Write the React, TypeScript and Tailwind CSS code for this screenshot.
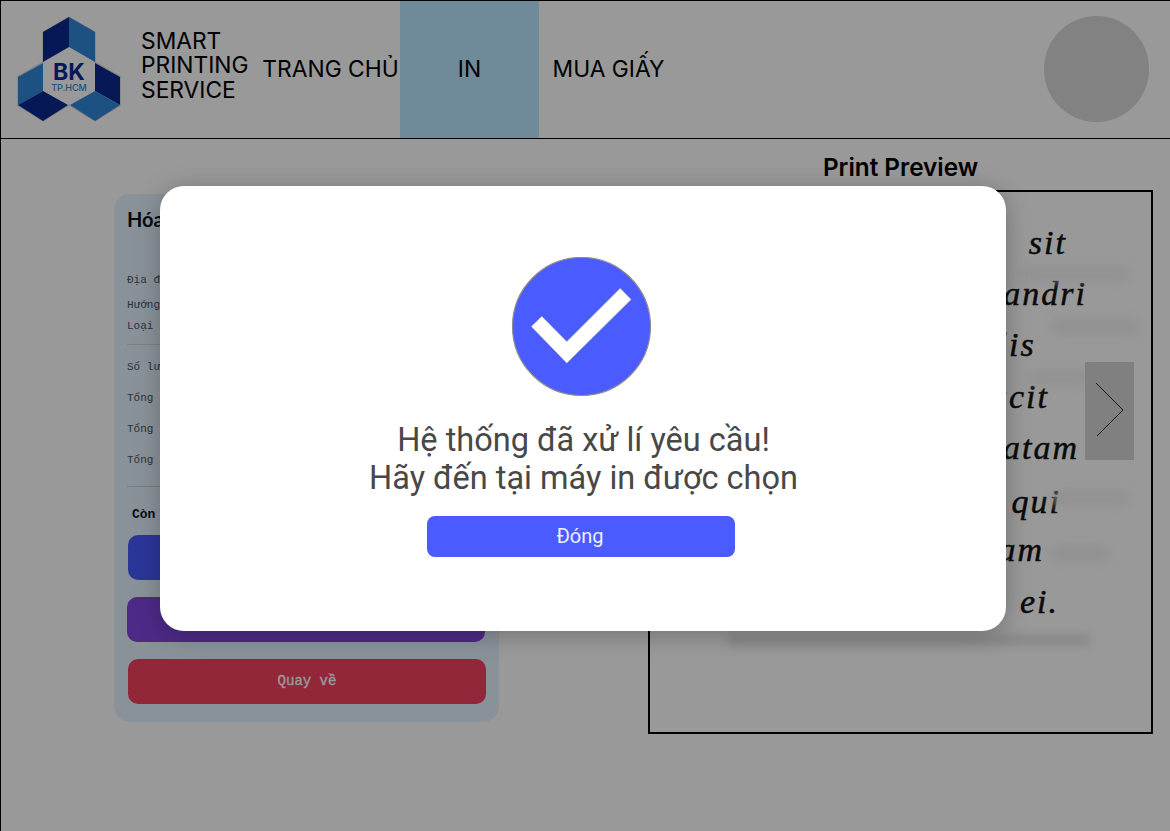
const rows = [
  { text: "Địa điểm: H6-101", cls: "mt-[39px]" },
  { text: "Hướng in: Dọc", cls: "mt-[9px]" },
  { text: "Loại giấy: A4", cls: "mt-[5px]" },
];

const totals = ["Tổng số trang: 8", "Tổng số tờ: 8", "Tổng tiền: 4000"];

const handwriting = [
  { text: "Lorem ipsum dolor sit", right: "pr-[84px]", top: "mt-[36px]" },
  { text: "nulla vel illum andri", right: "pr-[64px]", top: "mt-[21px]" },
  { text: "dolore eu feugiat lis", right: "pr-[118px]", top: "mt-[21px]" },
  { text: "consectetuer adipiscit", right: "pr-[102px]", top: "mt-[22px]" },
  { text: "nibh euismod veritatam", right: "pr-[72px]", top: "mt-[21px]" },
  { text: "blandit praesent qui", right: "pr-[90px]", top: "mt-[24px]" },
  { text: "laoreet dolore mam", right: "pr-[107px]", top: "mt-[18px]" },
  { text: "magna erat ei.", right: "pr-[92px]", top: "mt-[22px]" },
];

const smudges = [
  "top-[76px] left-[370px] w-[110px] h-[12px]",
  "top-[128px] left-[400px] w-[90px] h-[14px]",
  "top-[180px] left-[380px] w-[60px] h-[12px]",
  "top-[300px] left-[400px] w-[80px] h-[12px]",
  "top-[354px] left-[400px] w-[60px] h-[14px]",
];

function Logo() {
  return (
    <svg viewBox="0 0 104 105" className="h-[105px] w-[104px] shrink-0">
      <path d="M52 0 78 15V45L104 60V88L78 104 52 88 26 104 0 88V60L26 45V15Z" fill="#fff" stroke="#d0d0d0" strokeWidth="1" />
      <path d="M52 0V30L26 45V15Z" fill="#0a2a8f" />
      <path d="M52 0 78 15V45L52 30Z" fill="#3088d8" />
      <path d="M26 46 1 60V88L26 74Z" fill="#3088d8" />
      <path d="M78 46 103 60V88L78 74Z" fill="#0a2a8f" />
      <path d="M1 88 26 74 51 88 26 104Z" fill="#0a2a8f" />
      <path d="M53 88 78 74 103 88 78 104Z" fill="#3088d8" />
      <text x="52" y="62.5" textAnchor="middle" fontFamily="Inter, sans-serif" fontWeight="700" fontSize="23" fill="#0a2a8f">BK</text>
      <text x="52" y="74" textAnchor="middle" fontFamily="Inter, sans-serif" fontWeight="500" fontSize="9" fill="#3088d8">TP.HCM</text>
    </svg>
  );
}

export default function App() {
  return (
    <div className="relative h-[831px] w-[1170px] overflow-hidden border-l border-t border-black bg-white font-['Inter',sans-serif] text-black">
      <header className="flex h-[138px] items-center border-b border-black">
        <div className="ml-[16px]">
          <Logo />
        </div>
        <div className="mb-[8px] ml-[20px] w-[122px] text-[22.8px] leading-[24.5px]">
          SMART
          <br />
          PRINTING
          <br />
          SERVICE
        </div>
        <nav className="flex h-full items-center text-[22.8px]">
          <a className="flex h-full w-[137px] items-center justify-center whitespace-nowrap pr-[2px]">TRANG CHỦ</a>
          <a className="flex h-full w-[139px] items-center justify-center bg-[#b9e6ff]">IN</a>
          <a className="flex h-full w-[139px] items-center justify-center whitespace-nowrap">MUA GIẤY</a>
        </nav>
        <div className="mb-[1px] ml-auto mr-[21px] h-[106px] w-[105px] rounded-full bg-[#d9d9d9]" />
      </header>

      <main className="flex pl-[113px]">
        <section className="mt-[55px] flex h-[528px] w-[385px] flex-col rounded-[16px] bg-[#e6f3ff] px-[14px] pt-[11px]">
          <h2 className="-ml-px whitespace-nowrap text-[20px] font-bold leading-[28px] font-['Lato',sans-serif] text-[#0b1220]">Hóa đơn thanh toán</h2>
          <div className="-ml-px font-['Liberation_Mono',monospace] text-[11px] leading-[16px] text-[#4b5563]">
            {rows.map((r) => (
              <p key={r.text} className={r.cls}>{r.text}</p>
            ))}
            <hr className="mt-[10px] border-[#d1d5db]" />
            <p className="mt-[14px]">Số lượng: 1</p>
            {totals.map((t) => (
              <p key={t} className="mt-[15px]">{t}</p>
            ))}
            <hr className="mt-[18px] border-[#d1d5db]" />
          </div>
          <p className="ml-[4px] mt-[20px] font-['Liberation_Mono',monospace] text-[13px] font-bold leading-[16px] text-[#0b1220]">Còn lại: 100 trang</p>
          <button className="mt-[12px] h-[45px] w-[357px] rounded-[10px] bg-[#485bff] font-['Liberation_Mono',monospace] text-[14px] text-white">Thanh toán</button>
          <button className="-ml-px mt-[17px] h-[45px] w-[358px] rounded-[10px] bg-[#8046e3] font-['Liberation_Mono',monospace] text-[14px] text-white">Mua thêm giấy</button>
          <button className="mt-[17px] h-[45px] w-[358px] rounded-[10px] bg-[#f54161] font-['Liberation_Mono',monospace] text-[14px] text-white [-webkit-text-stroke:0.3px_#fff]">Quay về</button>
        </section>

        <section className="ml-[149px] flex w-[505px] flex-col">
          <h2 className="mt-[14px] text-center text-[24.3px] font-semibold leading-[29px]">Print Preview</h2>
          <div className="relative mt-[8px] h-[544px] overflow-hidden border-2 border-black bg-white">
            {smudges.map((s) => (
              <div key={s} className={`absolute rounded-full bg-[#f0f0f0] blur-[6px] ${s}`} />
            ))}
            {handwriting.map((l) => (
              <p
                key={l.text}
                className={`${l.top} ${l.right} whitespace-nowrap text-right font-['Liberation_Serif',serif] text-[34px] italic leading-[30px] tracking-[2px] text-[#111] [-webkit-text-stroke:0.5px_#111] [word-spacing:24px]`}
              >
                {l.text}
              </p>
            ))}
            <div className="absolute left-[78px] top-[442px] h-[12px] w-[362px] rounded bg-[#e4e4e4] blur-[4px]" />
            <button className="absolute left-[435px] top-[170px] flex h-[98px] w-[49px] items-center justify-center bg-[#d6d6d6]">
              <svg viewBox="0 0 49 98" className="h-[98px] w-[49px]">
                <path d="M11 21 38 48 12 74" fill="none" stroke="#000" strokeWidth="0.8" />
              </svg>
            </button>
          </div>
        </section>
      </main>

      <div className="absolute -inset-px bg-black/40">
        <div className="ml-[160px] mt-[186px] flex h-[445px] w-[846px] flex-col items-center rounded-[24px] bg-white pr-[4px] pt-[71px] font-['Roboto',sans-serif] shadow-[0_4px_24px_rgba(0,0,0,0.25)]">
          <svg viewBox="0 0 140 140" className="h-[140px] w-[140px]">
            <circle cx="70.5" cy="69.5" r="69" fill="#4a5bff" stroke="#8c8c8c" strokeWidth="1.2" />
            <path d="M20.2 69.5 30.8 59.2 55.8 84.5 109.2 31.2 120.2 42.5 55.8 106.2Z" fill="#fff" stroke="#9a9a9a" strokeWidth="0.6" />
          </svg>
          <p className="ml-[5px] mt-[24px] whitespace-nowrap text-center text-[32.5px] leading-[38px] text-[#484848]">
            Hệ thống đã xử lí yêu cầu!
            <br />
            Hãy đến tại máy in được chọn
          </p>
          <button className="mt-[19px] h-[41px] w-[308px] rounded-[8px] bg-[#4a5bff] pb-[1px] pr-[2px] text-[20px] text-white/90">Đóng</button>
        </div>
      </div>
    </div>
  );
}
